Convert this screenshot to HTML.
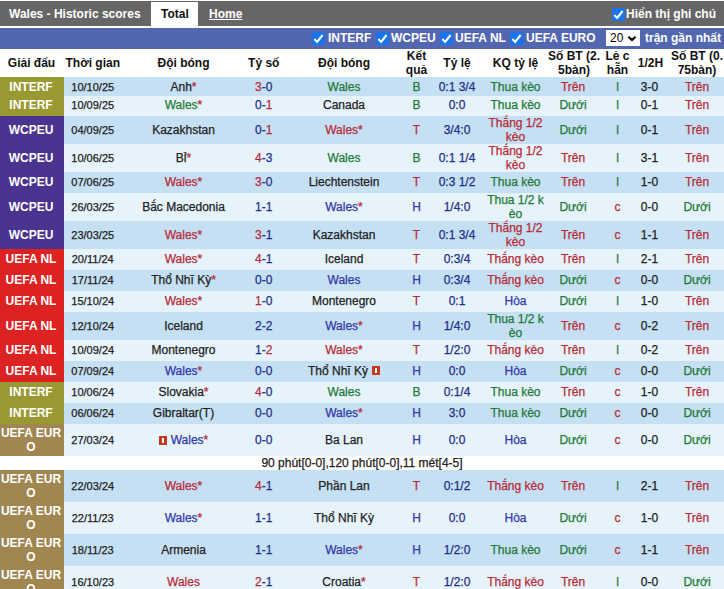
<!DOCTYPE html><html><head><meta charset="utf-8"><style>
*{margin:0;padding:0;box-sizing:border-box}
html,body{width:724px;height:589px;overflow:hidden;background:#fff}
body{position:relative;font-family:"Liberation Sans",sans-serif;font-size:12px;color:#222222}
.t{position:absolute;font-weight:bold;white-space:nowrap;line-height:14px}
.w{color:#fff} .k{color:#111} .u{text-decoration:underline}
#topbar{position:absolute;left:0;top:1px;width:724px;height:25px;background:#666666}
#tab{position:absolute;left:151px;top:2px;width:47px;height:24px;background:#fff}
#bluebar{position:absolute;left:0;top:28px;width:724px;height:21px;background:#5367b1}
.cb{position:absolute;width:13px;height:13px} .cb svg{display:block}
#sel{position:absolute;left:606px;top:30px;width:34px;height:16px;background:#fff;font-size:12px;color:#000}
#sel span{position:absolute;left:4px;top:1px;line-height:14px}
#sel svg{position:absolute;left:21px;top:5px}
.row{position:absolute;left:0;width:724px}
.light{background:#c5dff3} .lighter{background:#e6f3fb}
.hdr{background:#fff} .hdr .c{font-weight:bold;color:#111;-webkit-text-stroke:0} .hdr .h0{padding-right:1px}
.note{background:#fff} .s1 .c{padding-bottom:2px} .s1 .lg{padding-bottom:2px}
.c{-webkit-text-stroke:0.25px currentColor;position:absolute;top:0;height:100%;display:flex;align-items:center;justify-content:center;text-align:center;line-height:14px;white-space:nowrap}
.lg{-webkit-text-stroke:0;color:#fff;font-weight:bold;padding-right:2px} .dt{font-size:11px}
.lgINTERF{background:#999933} .lgWCPEU{background:#4a3490} .lgNL{background:#dd2222} .lgEURO{background:#a08650}
.cr{color:#b82a36} .cg{color:#1f7a38} .cb2{} .cb{} 
span.cbl,div.c.cbl{color:#3238a8}
.cn{color:#1f2e8a} .ck{color:#222222}
.rc{display:inline-block;position:relative;width:8px;height:9px;background:#c53a1c;margin:0 4px 0 0;vertical-align:-1px} .rc:after{content:'';position:absolute;left:3px;top:2px;width:2px;height:5px;background:#fff} .rc.ra{margin:0 0 0 4px}
</style></head><body><div id="topbar"></div><div class="t w" style="left:9px;top:7px;">Wales - Historic scores</div><div id="tab"></div><div class="t k" style="left:161px;top:7px;">Total</div><div class="t w u" style="left:209px;top:7px;">Home</div><div class="cb" style="left:612px;top:8px"><svg width="13" height="13" viewBox="0 0 13 13"><rect x="0" y="0" width="13" height="13" rx="2" fill="#1a73e8"/><path d="M2.3 7.1 L5.2 9.9 L10.6 3.0" stroke="#f4ffff" stroke-width="2.1" fill="none"/></svg></div><div class="t w" style="left:626px;top:7px;">Hiển thị ghi chú</div><div id="bluebar"></div><div class="cb" style="left:312px;top:32px"><svg width="13" height="13" viewBox="0 0 13 13"><rect x="0" y="0" width="13" height="13" rx="2" fill="#1a73e8"/><path d="M2.3 7.1 L5.2 9.9 L10.6 3.0" stroke="#f4ffff" stroke-width="2.1" fill="none"/></svg></div><div class="t w" style="left:328px;top:31px;">INTERF</div><div class="cb" style="left:376px;top:32px"><svg width="13" height="13" viewBox="0 0 13 13"><rect x="0" y="0" width="13" height="13" rx="2" fill="#1a73e8"/><path d="M2.3 7.1 L5.2 9.9 L10.6 3.0" stroke="#f4ffff" stroke-width="2.1" fill="none"/></svg></div><div class="t w" style="left:391px;top:31px;">WCPEU</div><div class="cb" style="left:440px;top:32px"><svg width="13" height="13" viewBox="0 0 13 13"><rect x="0" y="0" width="13" height="13" rx="2" fill="#1a73e8"/><path d="M2.3 7.1 L5.2 9.9 L10.6 3.0" stroke="#f4ffff" stroke-width="2.1" fill="none"/></svg></div><div class="t w" style="left:455px;top:31px;">UEFA NL</div><div class="cb" style="left:510px;top:32px"><svg width="13" height="13" viewBox="0 0 13 13"><rect x="0" y="0" width="13" height="13" rx="2" fill="#1a73e8"/><path d="M2.3 7.1 L5.2 9.9 L10.6 3.0" stroke="#f4ffff" stroke-width="2.1" fill="none"/></svg></div><div class="t w" style="left:526px;top:31px;">UEFA EURO</div><div id="sel"><span>20</span><svg width="11" height="8" viewBox="0 0 11 8"><path d="M1.4 1.7 L5.0 5.1 L8.6 1.7" stroke="#000" stroke-width="2.1" fill="none"/></svg></div><div class="t w" style="left:645px;top:31px;">trận gần nhất</div><div class="row hdr" style="top:49px;height:28px"><div class="c h0" style="left:0px;width:64px">Giải đấu</div><div class="c " style="left:64px;width:57.5px">Thời gian</div><div class="c " style="left:121.5px;width:124.0px">Đội bóng</div><div class="c " style="left:245.5px;width:36.5px">Tỷ số</div><div class="c " style="left:282px;width:124px">Đội bóng</div><div class="c " style="left:406px;width:21px">Kết<br>quả</div><div class="c " style="left:427px;width:60px">Tỷ lệ</div><div class="c " style="left:487px;width:57px">KQ tỷ lệ</div><div class="c " style="left:544px;width:60px">Số BT (2.<br>5bàn)</div><div class="c " style="left:604px;width:27px">Lẻ c<br>hẵn</div><div class="c " style="left:631px;width:39px">1/2H</div><div class="c " style="left:670px;width:54px">Số BT (0.<br>75bàn)</div></div><div class="row light" style="top:77px;height:19px"><div class="c lg lgINTERF" style="left:0px;width:64px">INTERF</div><div class="c dt" style="left:64px;width:57.5px">10/10/25</div><div class="c " style="left:121.5px;width:124.0px"><span class="ck">Anh</span><span class="cr">*</span></div><div class="c " style="left:245.5px;width:36.5px"><span class="cr">3</span><span class="cn">-</span><span class="cn">0</span></div><div class="c " style="left:282px;width:124px"><span class="cg">Wales</span></div><div class="c cg" style="left:406px;width:21px">B</div><div class="c cn" style="left:427px;width:60px">0:1 3/4</div><div class="c cg" style="left:487px;width:57px">Thua kèo</div><div class="c cr" style="left:544px;width:60px;padding-right:2px">Trên</div><div class="c cg" style="left:604px;width:27px">l</div><div class="c ck" style="left:631px;width:39px;padding-right:2px">3-0</div><div class="c cr" style="left:670px;width:54px">Trên</div></div><div class="row lighter s1" style="top:96px;height:20px"><div class="c lg lgINTERF" style="left:0px;width:64px">INTERF</div><div class="c dt" style="left:64px;width:57.5px">10/09/25</div><div class="c " style="left:121.5px;width:124.0px"><span class="cg">Wales</span><span class="cr">*</span></div><div class="c " style="left:245.5px;width:36.5px"><span class="cn">0</span><span class="cn">-</span><span class="cr">1</span></div><div class="c " style="left:282px;width:124px"><span class="ck">Canada</span></div><div class="c cg" style="left:406px;width:21px">B</div><div class="c cn" style="left:427px;width:60px">0:0</div><div class="c cg" style="left:487px;width:57px">Thua kèo</div><div class="c cg" style="left:544px;width:60px;padding-right:2px">Dưới</div><div class="c cg" style="left:604px;width:27px">l</div><div class="c ck" style="left:631px;width:39px;padding-right:2px">0-1</div><div class="c cr" style="left:670px;width:54px">Trên</div></div><div class="row light" style="top:116px;height:28px"><div class="c lg lgWCPEU" style="left:0px;width:64px">WCPEU</div><div class="c dt" style="left:64px;width:57.5px">04/09/25</div><div class="c " style="left:121.5px;width:124.0px"><span class="ck">Kazakhstan</span></div><div class="c " style="left:245.5px;width:36.5px"><span class="cn">0</span><span class="cn">-</span><span class="cr">1</span></div><div class="c " style="left:282px;width:124px"><span class="cr">Wales</span><span class="cr">*</span></div><div class="c cr" style="left:406px;width:21px">T</div><div class="c cn" style="left:427px;width:60px">3/4:0</div><div class="c cr" style="left:487px;width:57px">Thắng 1/2<br>kèo</div><div class="c cg" style="left:544px;width:60px;padding-right:2px">Dưới</div><div class="c cg" style="left:604px;width:27px">l</div><div class="c ck" style="left:631px;width:39px;padding-right:2px">0-1</div><div class="c cr" style="left:670px;width:54px">Trên</div></div><div class="row lighter" style="top:144px;height:28px"><div class="c lg lgWCPEU" style="left:0px;width:64px">WCPEU</div><div class="c dt" style="left:64px;width:57.5px">10/06/25</div><div class="c " style="left:121.5px;width:124.0px"><span class="ck">Bỉ</span><span class="cr">*</span></div><div class="c " style="left:245.5px;width:36.5px"><span class="cr">4</span><span class="cn">-</span><span class="cn">3</span></div><div class="c " style="left:282px;width:124px"><span class="cg">Wales</span></div><div class="c cg" style="left:406px;width:21px">B</div><div class="c cn" style="left:427px;width:60px">0:1 1/4</div><div class="c cr" style="left:487px;width:57px">Thắng 1/2<br>kèo</div><div class="c cr" style="left:544px;width:60px;padding-right:2px">Trên</div><div class="c cg" style="left:604px;width:27px">l</div><div class="c ck" style="left:631px;width:39px;padding-right:2px">3-1</div><div class="c cr" style="left:670px;width:54px">Trên</div></div><div class="row light s1" style="top:172px;height:21px"><div class="c lg lgWCPEU" style="left:0px;width:64px">WCPEU</div><div class="c dt" style="left:64px;width:57.5px">07/06/25</div><div class="c " style="left:121.5px;width:124.0px"><span class="cr">Wales</span><span class="cr">*</span></div><div class="c " style="left:245.5px;width:36.5px"><span class="cr">3</span><span class="cn">-</span><span class="cn">0</span></div><div class="c " style="left:282px;width:124px"><span class="ck">Liechtenstein</span></div><div class="c cr" style="left:406px;width:21px">T</div><div class="c cn" style="left:427px;width:60px">0:3 1/2</div><div class="c cg" style="left:487px;width:57px">Thua kèo</div><div class="c cr" style="left:544px;width:60px;padding-right:2px">Trên</div><div class="c cg" style="left:604px;width:27px">l</div><div class="c ck" style="left:631px;width:39px;padding-right:2px">1-0</div><div class="c cr" style="left:670px;width:54px">Trên</div></div><div class="row lighter" style="top:193px;height:28px"><div class="c lg lgWCPEU" style="left:0px;width:64px">WCPEU</div><div class="c dt" style="left:64px;width:57.5px">26/03/25</div><div class="c " style="left:121.5px;width:124.0px"><span class="ck">Bắc Macedonia</span></div><div class="c " style="left:245.5px;width:36.5px"><span class="cn">1</span><span class="cn">-</span><span class="cn">1</span></div><div class="c " style="left:282px;width:124px"><span class="cbl">Wales</span><span class="cr">*</span></div><div class="c cbl" style="left:406px;width:21px">H</div><div class="c cn" style="left:427px;width:60px">1/4:0</div><div class="c cg" style="left:487px;width:57px">Thua 1/2 k<br>èo</div><div class="c cg" style="left:544px;width:60px;padding-right:2px">Dưới</div><div class="c cr" style="left:604px;width:27px">c</div><div class="c ck" style="left:631px;width:39px;padding-right:2px">0-0</div><div class="c cg" style="left:670px;width:54px">Dưới</div></div><div class="row light" style="top:221px;height:28px"><div class="c lg lgWCPEU" style="left:0px;width:64px">WCPEU</div><div class="c dt" style="left:64px;width:57.5px">23/03/25</div><div class="c " style="left:121.5px;width:124.0px"><span class="cr">Wales</span><span class="cr">*</span></div><div class="c " style="left:245.5px;width:36.5px"><span class="cr">3</span><span class="cn">-</span><span class="cn">1</span></div><div class="c " style="left:282px;width:124px"><span class="ck">Kazakhstan</span></div><div class="c cr" style="left:406px;width:21px">T</div><div class="c cn" style="left:427px;width:60px">0:1 3/4</div><div class="c cr" style="left:487px;width:57px">Thắng 1/2<br>kèo</div><div class="c cr" style="left:544px;width:60px;padding-right:2px">Trên</div><div class="c cr" style="left:604px;width:27px">c</div><div class="c ck" style="left:631px;width:39px;padding-right:2px">1-1</div><div class="c cr" style="left:670px;width:54px">Trên</div></div><div class="row lighter s1" style="top:249px;height:21px"><div class="c lg lgNL" style="left:0px;width:64px">UEFA NL</div><div class="c dt" style="left:64px;width:57.5px">20/11/24</div><div class="c " style="left:121.5px;width:124.0px"><span class="cr">Wales</span><span class="cr">*</span></div><div class="c " style="left:245.5px;width:36.5px"><span class="cr">4</span><span class="cn">-</span><span class="cn">1</span></div><div class="c " style="left:282px;width:124px"><span class="ck">Iceland</span></div><div class="c cr" style="left:406px;width:21px">T</div><div class="c cn" style="left:427px;width:60px">0:3/4</div><div class="c cr" style="left:487px;width:57px">Thắng kèo</div><div class="c cr" style="left:544px;width:60px;padding-right:2px">Trên</div><div class="c cg" style="left:604px;width:27px">l</div><div class="c ck" style="left:631px;width:39px;padding-right:2px">2-1</div><div class="c cr" style="left:670px;width:54px">Trên</div></div><div class="row light s1" style="top:270px;height:21px"><div class="c lg lgNL" style="left:0px;width:64px">UEFA NL</div><div class="c dt" style="left:64px;width:57.5px">17/11/24</div><div class="c " style="left:121.5px;width:124.0px"><span class="ck">Thổ Nhĩ Kỳ</span><span class="cr">*</span></div><div class="c " style="left:245.5px;width:36.5px"><span class="cn">0</span><span class="cn">-</span><span class="cn">0</span></div><div class="c " style="left:282px;width:124px"><span class="cbl">Wales</span></div><div class="c cbl" style="left:406px;width:21px">H</div><div class="c cn" style="left:427px;width:60px">0:3/4</div><div class="c cr" style="left:487px;width:57px">Thắng kèo</div><div class="c cg" style="left:544px;width:60px;padding-right:2px">Dưới</div><div class="c cr" style="left:604px;width:27px">c</div><div class="c ck" style="left:631px;width:39px;padding-right:2px">0-0</div><div class="c cg" style="left:670px;width:54px">Dưới</div></div><div class="row lighter s1" style="top:291px;height:21px"><div class="c lg lgNL" style="left:0px;width:64px">UEFA NL</div><div class="c dt" style="left:64px;width:57.5px">15/10/24</div><div class="c " style="left:121.5px;width:124.0px"><span class="cr">Wales</span><span class="cr">*</span></div><div class="c " style="left:245.5px;width:36.5px"><span class="cr">1</span><span class="cn">-</span><span class="cn">0</span></div><div class="c " style="left:282px;width:124px"><span class="ck">Montenegro</span></div><div class="c cr" style="left:406px;width:21px">T</div><div class="c cn" style="left:427px;width:60px">0:1</div><div class="c cbl" style="left:487px;width:57px">Hòa</div><div class="c cg" style="left:544px;width:60px;padding-right:2px">Dưới</div><div class="c cg" style="left:604px;width:27px">l</div><div class="c ck" style="left:631px;width:39px;padding-right:2px">1-0</div><div class="c cr" style="left:670px;width:54px">Trên</div></div><div class="row light" style="top:312px;height:28px"><div class="c lg lgNL" style="left:0px;width:64px">UEFA NL</div><div class="c dt" style="left:64px;width:57.5px">12/10/24</div><div class="c " style="left:121.5px;width:124.0px"><span class="ck">Iceland</span></div><div class="c " style="left:245.5px;width:36.5px"><span class="cn">2</span><span class="cn">-</span><span class="cn">2</span></div><div class="c " style="left:282px;width:124px"><span class="cbl">Wales</span><span class="cr">*</span></div><div class="c cbl" style="left:406px;width:21px">H</div><div class="c cn" style="left:427px;width:60px">1/4:0</div><div class="c cg" style="left:487px;width:57px">Thua 1/2 k<br>èo</div><div class="c cr" style="left:544px;width:60px;padding-right:2px">Trên</div><div class="c cr" style="left:604px;width:27px">c</div><div class="c ck" style="left:631px;width:39px;padding-right:2px">0-2</div><div class="c cr" style="left:670px;width:54px">Trên</div></div><div class="row lighter s1" style="top:340px;height:21px"><div class="c lg lgNL" style="left:0px;width:64px">UEFA NL</div><div class="c dt" style="left:64px;width:57.5px">10/09/24</div><div class="c " style="left:121.5px;width:124.0px"><span class="ck">Montenegro</span></div><div class="c " style="left:245.5px;width:36.5px"><span class="cn">1</span><span class="cn">-</span><span class="cr">2</span></div><div class="c " style="left:282px;width:124px"><span class="cr">Wales</span><span class="cr">*</span></div><div class="c cr" style="left:406px;width:21px">T</div><div class="c cn" style="left:427px;width:60px">1/2:0</div><div class="c cr" style="left:487px;width:57px">Thắng kèo</div><div class="c cr" style="left:544px;width:60px;padding-right:2px">Trên</div><div class="c cg" style="left:604px;width:27px">l</div><div class="c ck" style="left:631px;width:39px;padding-right:2px">0-2</div><div class="c cr" style="left:670px;width:54px">Trên</div></div><div class="row light s1" style="top:361px;height:21px"><div class="c lg lgNL" style="left:0px;width:64px">UEFA NL</div><div class="c dt" style="left:64px;width:57.5px">07/09/24</div><div class="c " style="left:121.5px;width:124.0px"><span class="cbl">Wales</span><span class="cr">*</span></div><div class="c " style="left:245.5px;width:36.5px"><span class="cn">0</span><span class="cn">-</span><span class="cn">0</span></div><div class="c " style="left:282px;width:124px"><span class="ck">Thổ Nhĩ Kỳ</span><i class="rc ra"></i></div><div class="c cbl" style="left:406px;width:21px">H</div><div class="c cn" style="left:427px;width:60px">0:0</div><div class="c cbl" style="left:487px;width:57px">Hòa</div><div class="c cg" style="left:544px;width:60px;padding-right:2px">Dưới</div><div class="c cr" style="left:604px;width:27px">c</div><div class="c ck" style="left:631px;width:39px;padding-right:2px">0-0</div><div class="c cg" style="left:670px;width:54px">Dưới</div></div><div class="row lighter s1" style="top:382px;height:21px"><div class="c lg lgINTERF" style="left:0px;width:64px">INTERF</div><div class="c dt" style="left:64px;width:57.5px">10/06/24</div><div class="c " style="left:121.5px;width:124.0px"><span class="ck">Slovakia</span><span class="cr">*</span></div><div class="c " style="left:245.5px;width:36.5px"><span class="cr">4</span><span class="cn">-</span><span class="cn">0</span></div><div class="c " style="left:282px;width:124px"><span class="cg">Wales</span></div><div class="c cg" style="left:406px;width:21px">B</div><div class="c cn" style="left:427px;width:60px">0:1/4</div><div class="c cg" style="left:487px;width:57px">Thua kèo</div><div class="c cr" style="left:544px;width:60px;padding-right:2px">Trên</div><div class="c cr" style="left:604px;width:27px">c</div><div class="c ck" style="left:631px;width:39px;padding-right:2px">1-0</div><div class="c cr" style="left:670px;width:54px">Trên</div></div><div class="row light s1" style="top:403px;height:21px"><div class="c lg lgINTERF" style="left:0px;width:64px">INTERF</div><div class="c dt" style="left:64px;width:57.5px">06/06/24</div><div class="c " style="left:121.5px;width:124.0px"><span class="ck">Gibraltar(T)</span></div><div class="c " style="left:245.5px;width:36.5px"><span class="cn">0</span><span class="cn">-</span><span class="cn">0</span></div><div class="c " style="left:282px;width:124px"><span class="cbl">Wales</span><span class="cr">*</span></div><div class="c cbl" style="left:406px;width:21px">H</div><div class="c cn" style="left:427px;width:60px">3:0</div><div class="c cg" style="left:487px;width:57px">Thua kèo</div><div class="c cg" style="left:544px;width:60px;padding-right:2px">Dưới</div><div class="c cr" style="left:604px;width:27px">c</div><div class="c ck" style="left:631px;width:39px;padding-right:2px">0-0</div><div class="c cg" style="left:670px;width:54px">Dưới</div></div><div class="row lighter" style="top:424px;height:32px"><div class="c lg lgEURO" style="left:0px;width:64px">UEFA EUR<br>O</div><div class="c dt" style="left:64px;width:57.5px">27/03/24</div><div class="c " style="left:121.5px;width:124.0px"><i class="rc"></i><span class="cbl">Wales</span><span class="cr">*</span></div><div class="c " style="left:245.5px;width:36.5px"><span class="cn">0</span><span class="cn">-</span><span class="cn">0</span></div><div class="c " style="left:282px;width:124px"><span class="ck">Ba Lan</span></div><div class="c cbl" style="left:406px;width:21px">H</div><div class="c cn" style="left:427px;width:60px">0:0</div><div class="c cbl" style="left:487px;width:57px">Hòa</div><div class="c cg" style="left:544px;width:60px;padding-right:2px">Dưới</div><div class="c cr" style="left:604px;width:27px">c</div><div class="c ck" style="left:631px;width:39px;padding-right:2px">0-0</div><div class="c cg" style="left:670px;width:54px">Dưới</div></div><div class="row note" style="top:456px;height:14px"><div class="c" style="left:0;width:724px">90 phút[0-0],120 phút[0-0],11 mét[4-5]</div></div><div class="row light" style="top:470px;height:32px"><div class="c lg lgEURO" style="left:0px;width:64px">UEFA EUR<br>O</div><div class="c dt" style="left:64px;width:57.5px">22/03/24</div><div class="c " style="left:121.5px;width:124.0px"><span class="cr">Wales</span><span class="cr">*</span></div><div class="c " style="left:245.5px;width:36.5px"><span class="cr">4</span><span class="cn">-</span><span class="cn">1</span></div><div class="c " style="left:282px;width:124px"><span class="ck">Phần Lan</span></div><div class="c cr" style="left:406px;width:21px">T</div><div class="c cn" style="left:427px;width:60px">0:1/2</div><div class="c cr" style="left:487px;width:57px">Thắng kèo</div><div class="c cr" style="left:544px;width:60px;padding-right:2px">Trên</div><div class="c cg" style="left:604px;width:27px">l</div><div class="c ck" style="left:631px;width:39px;padding-right:2px">2-1</div><div class="c cr" style="left:670px;width:54px">Trên</div></div><div class="row lighter" style="top:502px;height:32px"><div class="c lg lgEURO" style="left:0px;width:64px">UEFA EUR<br>O</div><div class="c dt" style="left:64px;width:57.5px">22/11/23</div><div class="c " style="left:121.5px;width:124.0px"><span class="cbl">Wales</span><span class="cr">*</span></div><div class="c " style="left:245.5px;width:36.5px"><span class="cn">1</span><span class="cn">-</span><span class="cn">1</span></div><div class="c " style="left:282px;width:124px"><span class="ck">Thổ Nhĩ Kỳ</span></div><div class="c cbl" style="left:406px;width:21px">H</div><div class="c cn" style="left:427px;width:60px">0:0</div><div class="c cbl" style="left:487px;width:57px">Hòa</div><div class="c cg" style="left:544px;width:60px;padding-right:2px">Dưới</div><div class="c cr" style="left:604px;width:27px">c</div><div class="c ck" style="left:631px;width:39px;padding-right:2px">1-0</div><div class="c cr" style="left:670px;width:54px">Trên</div></div><div class="row light" style="top:534px;height:32px"><div class="c lg lgEURO" style="left:0px;width:64px">UEFA EUR<br>O</div><div class="c dt" style="left:64px;width:57.5px">18/11/23</div><div class="c " style="left:121.5px;width:124.0px"><span class="ck">Armenia</span></div><div class="c " style="left:245.5px;width:36.5px"><span class="cn">1</span><span class="cn">-</span><span class="cn">1</span></div><div class="c " style="left:282px;width:124px"><span class="cbl">Wales</span><span class="cr">*</span></div><div class="c cbl" style="left:406px;width:21px">H</div><div class="c cn" style="left:427px;width:60px">1/2:0</div><div class="c cg" style="left:487px;width:57px">Thua kèo</div><div class="c cg" style="left:544px;width:60px;padding-right:2px">Dưới</div><div class="c cr" style="left:604px;width:27px">c</div><div class="c ck" style="left:631px;width:39px;padding-right:2px">1-1</div><div class="c cr" style="left:670px;width:54px">Trên</div></div><div class="row lighter" style="top:566px;height:32px"><div class="c lg lgEURO" style="left:0px;width:64px">UEFA EUR<br>O</div><div class="c dt" style="left:64px;width:57.5px">16/10/23</div><div class="c " style="left:121.5px;width:124.0px"><span class="cr">Wales</span></div><div class="c " style="left:245.5px;width:36.5px"><span class="cr">2</span><span class="cn">-</span><span class="cn">1</span></div><div class="c " style="left:282px;width:124px"><span class="ck">Croatia</span><span class="cr">*</span></div><div class="c cr" style="left:406px;width:21px">T</div><div class="c cn" style="left:427px;width:60px">1/2:0</div><div class="c cr" style="left:487px;width:57px">Thắng kèo</div><div class="c cr" style="left:544px;width:60px;padding-right:2px">Trên</div><div class="c cg" style="left:604px;width:27px">l</div><div class="c ck" style="left:631px;width:39px;padding-right:2px">0-0</div><div class="c cg" style="left:670px;width:54px">Dưới</div></div></body></html>
